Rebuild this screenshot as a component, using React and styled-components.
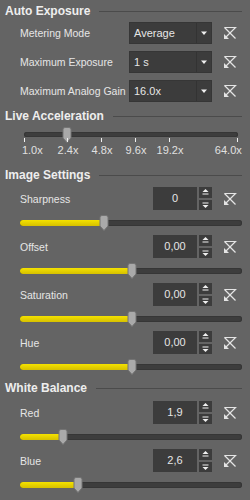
import styled, { createGlobalStyle } from "styled-components";

const GlobalStyle = createGlobalStyle`
  html, body {
    margin: 0;
    padding: 0;
    background: #646464;
  }
  body {
    font-family: "Liberation Sans", Arial, sans-serif;
    font-size: 11px;
    color: #e6e6e6;
  }
`;

const Panel = styled.div`
  width: 250px;
  height: 500px;
  display: flex;
  flex-direction: column;
  overflow: hidden;
`;

const SectionHead = styled.div`
  display: flex;
  align-items: center;
  height: 16px;
  margin-top: ${(p) => p.$top}px;
  padding: 0 8px 0 5px;
  gap: 9px;
`;

const SectionTitle = styled.span`
  font-weight: bold;
  font-size: 12px;
  color: #eeeeee;
  white-space: nowrap;
`;

const Rule = styled.div`
  flex: 1;
  height: 1px;
  background: #4b4b4b;
`;

const Body = styled.div`
  display: flex;
  flex-direction: column;
  gap: ${(p) => p.$gap || 0}px;
  margin-top: ${(p) => p.$top}px;
`;

const Row = styled.div`
  display: flex;
  align-items: center;
  height: ${(p) => p.$h || 22}px;
  padding-left: 20px;
`;

const Label = styled.span`
  flex: 1;
  font-size: 10.5px;
  white-space: nowrap;
`;

const Combo = styled.div`
  width: 83px;
  height: 22px;
  display: flex;
  background: #3c3c3c;
  box-sizing: border-box;
  border: 1px solid #363636;
`;

const ComboText = styled.span`
  flex: 1;
  line-height: 20px;
  padding-left: 4px;
`;

const ComboArrow = styled.span`
  width: 14px;
  border-left: 1px solid #333333;
  display: flex;
  align-items: center;
  justify-content: center;
`;

const Spin = styled.div`
  display: flex;
  gap: 2px;
  height: 23px;
`;

const SpinField = styled.div`
  width: 44px;
  background: #3c3c3c;
  text-align: center;
  line-height: 23px;
`;

const SpinButtons = styled.div`
  width: 13px;
  display: flex;
  flex-direction: column;
  gap: 2px;
`;

const SpinButton = styled.div`
  flex: 1;
  background: #3c3c3c;
  display: flex;
  align-items: center;
  justify-content: center;
`;

const ResetSlot = styled.div`
  width: 38px;
  display: flex;
  justify-content: flex-start;
  padding-left: 11px;
  box-sizing: border-box;
`;

const Track = styled.div`
  position: relative;
  height: 25px;
  margin: 0 8px 0 20px;
  display: flex;
  align-items: center;
`;

const Groove = styled.div`
  flex: 1;
  height: ${(p) => p.$h || 6}px;
  border-radius: 3px;
  background: #3d3d3d;
  box-shadow: inset 0 0 0 1px #363636;
  overflow: hidden;
`;

const Fill = styled.div`
  height: 100%;
  background: linear-gradient(#f4e200, #d6c000);
`;

const Handle = styled.svg`
  position: absolute;
  top: ${(p) => p.$top}px;
`;

const AccelBlock = styled.div`
  margin: 1px 12px 0 24px;
`;

const AccelTrack = styled.div`
  position: relative;
  height: 18px;
  padding-top: 7px;
  box-sizing: border-box;
`;

const Ticks = styled.div`
  position: relative;
  height: 14px;
`;

const Tick = styled.span`
  position: absolute;
  top: -5px;
  width: 1px;
  height: 4px;
  background: #f0f0f0;
`;

const TickLabel = styled.span`
  position: absolute;
  top: 0;
  transform: translateX(${(p) => p.$shift}%);
  line-height: 14px;
  color: #e0e0e0;
  white-space: nowrap;
`;

function ResetIcon() {
  return (
    <svg width="14" height="14" viewBox="0 0 14 14">
      <g stroke="#e4e4e4" strokeWidth="1.2" fill="none">
        <path d="M1.5 1.5 H12.5 L3 11" />
        <path d="M1.5 1.5 L12.5 12.5" />
      </g>
      <path d="M1 13 L1 8 L6 13 Z" fill="#e4e4e4" />
    </svg>
  );
}

function ArrowDown() {
  return (
    <svg width="8" height="5" viewBox="0 0 8 5">
      <path d="M1 0.5 H7 L4 4 Z" fill="#f0f0f0" />
    </svg>
  );
}

function SpinArrow({ up }) {
  return (
    <svg width="7" height="6" viewBox="0 0 7 6">
      {up ? (
        <>
          <path d="M0.5 3 L3.5 0 L6.5 3 Z" fill="#f0f0f0" />
          <rect x="0.5" y="4.5" width="6" height="1" fill="#f0f0f0" />
        </>
      ) : (
        <>
          <rect x="0.5" y="0.5" width="6" height="1" fill="#f0f0f0" />
          <path d="M0.5 3 L3.5 6 L6.5 3 Z" fill="#f0f0f0" />
        </>
      )}
    </svg>
  );
}

function Knob({ left, top }) {
  return (
    <Handle $top={top} width="10" height="16" viewBox="0 0 10 16" style={{ left }}>
      <path
        d="M1 2.5 Q1 0.5 3 0.5 H7 Q9 0.5 9 2.5 V11 L5 15.5 L1 11 Z"
        fill="#a9a9a9"
        stroke="#747474"
      />
    </Handle>
  );
}

function ComboRow({ label, value }) {
  return (
    <Row>
      <Label>{label}</Label>
      <Combo>
        <ComboText>{value}</ComboText>
        <ComboArrow>
          <ArrowDown />
        </ComboArrow>
      </Combo>
      <ResetSlot>
        <ResetIcon />
      </ResetSlot>
    </Row>
  );
}

function SliderItem({ label, value, pct }) {
  return (
    <div>
      <Row $h={23}>
        <Label>{label}</Label>
        <Spin>
          <SpinField>{value}</SpinField>
          <SpinButtons>
            <SpinButton>
              <SpinArrow up />
            </SpinButton>
            <SpinButton>
              <SpinArrow />
            </SpinButton>
          </SpinButtons>
        </Spin>
        <ResetSlot>
          <ResetIcon />
        </ResetSlot>
      </Row>
      <Track>
        <Groove>
          <Fill style={{ width: `${pct}%` }} />
        </Groove>
        <Knob left={`calc(${pct}% - 5px)`} top={5} />
      </Track>
    </div>
  );
}

const ticks = [
  { label: "1.0x", x: 0, shift: -15 },
  { label: "2.4x", x: 43, shift: -50 },
  { label: "4.8x", x: 77, shift: -50 },
  { label: "9.6x", x: 111, shift: -50 },
  { label: "19.2x", x: 145, shift: -50 },
  { label: "64.0x", x: 213, shift: -86 },
];

export default function App() {
  return (
    <Panel>
      <GlobalStyle />

      <SectionHead $top={3}>
        <SectionTitle>Auto Exposure</SectionTitle>
        <Rule />
      </SectionHead>
      <Body $top={3} $gap={7}>
        <ComboRow label="Metering Mode" value="Average" />
        <ComboRow label="Maximum Exposure" value="1 s" />
        <ComboRow label="Maximum Analog Gain" value="16.0x" />
      </Body>

      <SectionHead $top={6}>
        <SectionTitle>Live Acceleration</SectionTitle>
        <Rule />
      </SectionHead>
      <AccelBlock>
        <AccelTrack>
          <Groove $h={5} />
          <Knob left={38} top={2} />
        </AccelTrack>
        <Ticks>
          {ticks.map((t) => (
            <span key={t.label}>
              <Tick style={{ left: t.x }} />
              <TickLabel $shift={t.shift} style={{ left: t.x + 1 }}>
                {t.label}
              </TickLabel>
            </span>
          ))}
        </Ticks>
      </AccelBlock>

      <SectionHead $top={10}>
        <SectionTitle>Image Settings</SectionTitle>
        <Rule />
      </SectionHead>
      <Body $top={4}>
        <SliderItem label="Sharpness" value="0" pct={38} />
        <SliderItem label="Offset" value="0,00" pct={50.5} />
        <SliderItem label="Saturation" value="0,00" pct={50.5} />
        <SliderItem label="Hue" value="0,00" pct={50.5} />
      </Body>

      <SectionHead $top={1}>
        <SectionTitle>White Balance</SectionTitle>
        <Rule />
      </SectionHead>
      <Body $top={5}>
        <SliderItem label="Red" value="1,9" pct={19.5} />
        <SliderItem label="Blue" value="2,6" pct={26} />
      </Body>
    </Panel>
  );
}
